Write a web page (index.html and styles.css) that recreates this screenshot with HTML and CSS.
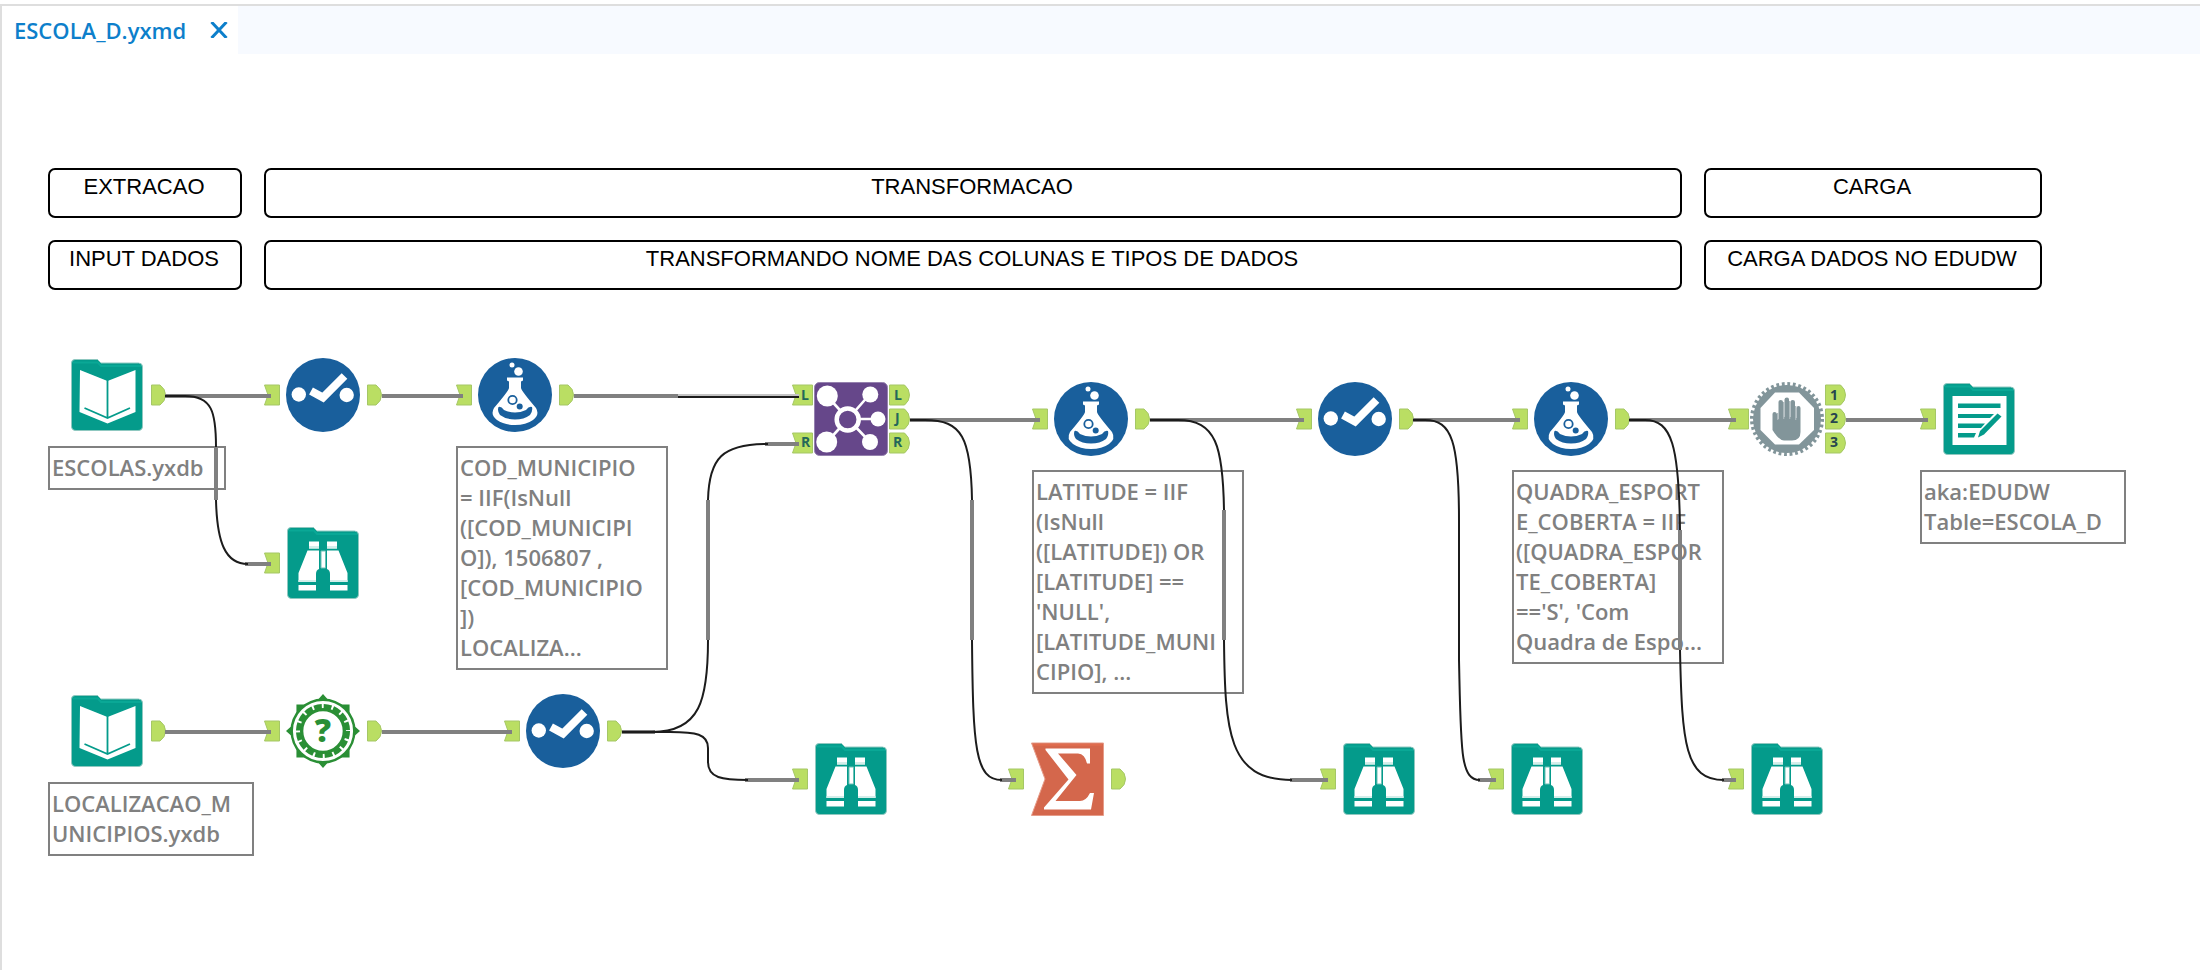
FILE: index.html
```html
<!DOCTYPE html>
<html lang="pt">
<head>
<meta charset="utf-8">
<title>ESCOLA_D.yxmd</title>
<link rel="stylesheet" href="styles.css">
</head>
<body>
<svg class="defs" aria-hidden="true">
  <symbol id="port-in" viewBox="0 0 16 22"><path class="port-shape" d="M.5 1H15.500V21H.5L4 11Z"/></symbol>
  <symbol id="port-out" viewBox="0 0 15 22"><path class="port-shape" d="M.5 1H9Q14.500 5 14.500 11Q14.500 17 9 21H.5Z"/></symbol>
  <symbol id="port-in-wide" viewBox="0 0 21 22"><path class="port-shape" d="M.5 1H20.500V21H.5L4 11Z"/></symbol>
  <symbol id="port-out-wide" viewBox="0 0 21 22"><path class="port-shape" d="M.5 1H15.500Q20.500 5 20.500 11Q20.500 17 15.500 21H.5Z"/></symbol>

  <symbol id="folder" viewBox="0 0 74 74">
    <path d="M5 1.500H27.500L31 5H68.500Q72.500 5 72.500 9V68Q72.500 72.500 68 72.500H6Q1.500 72.500 1.500 68V5Q1.500 1.500 5 1.500Z" fill="#049b8b" stroke="#8fc8c0" stroke-width="1"/>
    <path d="M3 4.500H28L31 8H71" fill="none" stroke="#0aa896" stroke-width="2"/>
  </symbol>

  <symbol id="input" viewBox="0 0 74 74">
    <use href="#folder"/>
    <path d="M10 12L37.500 23L65.500 12V54L37.500 65.500L9.500 54Z" fill="#fff"/>
    <path d="M37.500 22V60M14.500 50L37.500 60L60 50" fill="none" stroke="#049b8b" stroke-width="1.800"/>
  </symbol>

  <symbol id="browse" viewBox="0 0 74 74">
    <use href="#folder"/>
    <path fill="#fff" d="M23 15.500H33V22.500H23ZM41 15.500H51V22.500H41ZM21.500 24.500H33V43Q30 44 30 48V56H12.500V47ZM41 24.500H52.500L61.500 47V56H44V48Q44 44 41 43ZM12.500 59H30V64.500H12.500ZM44 59H61.500V64.500H44Z"/>
    <path fill="#d4eeea" d="M23 20H33V22.500H23ZM41 20H51V22.500H41ZM12.500 54H30V56H12.500ZM44 54H61.500V56H44Z"/>
    <path fill="#fff" stroke="#6dc0b6" stroke-width="1" d="M35 25H39.500V42H35Z"/>
  </symbol>

  <symbol id="select" viewBox="0 0 74 74">
    <circle cx="37" cy="37" r="37" fill="#195f9c"/>
    <circle cx="12.800" cy="36.500" r="7.200" fill="#fff"/>
    <circle cx="60.700" cy="37" r="7.200" fill="#fff"/>
    <path d="M25 33L37 39.500L58.500 18" fill="none" stroke="#fff" stroke-width="8"/>
  </symbol>

  <symbol id="formula" viewBox="0 0 74 74">
    <circle cx="37" cy="37" r="37" fill="#195f9c"/>
    <circle cx="34" cy="7" r="2.500" fill="#fff"/>
    <circle cx="40.500" cy="13.500" r="4.300" fill="#fff"/>
    <path d="M29 19.500H45V22.500L43 23.500V30Q43.500 33 58 50Q62 57 55 62Q48 67 37 67Q26 67 19 62Q12 57 16 50Q30.500 33 31 30V23.500L29 22.500Z" fill="#fff"/>
    <path d="M20.500 49Q23 48 26 52Q37 57 48 52Q51 48 54 49Q55 53 52 57Q46 61.500 37 61.500Q28 61.500 22 57Q19 53 20.500 49Z" fill="#195f9c"/>
    <circle cx="34.500" cy="42" r="4.200" fill="#fff" stroke="#195f9c" stroke-width="1.800"/>
    <circle cx="41.700" cy="48.500" r="3" fill="#195f9c"/>
  </symbol>

  <symbol id="test" viewBox="0 0 78 78">
    <path fill="#2a8f35" d="M11 11H26L11 26ZM67 11V26L52 11ZM67 67H52L67 52ZM11 67V52L26 67ZM39 0L46 8H32ZM39 78L32 70H46ZM0 39L8 32V46ZM78 39L70 46V32Z"/>
    <circle cx="39" cy="39" r="33" fill="#fff" stroke="#2a8f35" stroke-width="2.600"/>
    <circle cx="39" cy="39" r="25.500" fill="none" stroke="#2a8f35" stroke-width="6" stroke-dasharray="8 2.010"/>
    <circle cx="39" cy="39" r="22.500" fill="none" stroke="#2a8f35" stroke-width="3.500"/>
  </symbol>

  <symbol id="join" viewBox="0 0 74 74">
    <rect x=".5" y=".5" width="73" height="73" rx="5" fill="#66478a" stroke="#9581ae"/>
    <path d="M13 14L34 37L56 12M34 37H64M13 60L34 37L56 60" fill="none" stroke="#fff" stroke-width="2.600"/>
    <g fill="#fff">
      <circle cx="13.300" cy="14" r="10.500"/><circle cx="12.700" cy="60" r="10.500"/>
      <circle cx="56.300" cy="12.500" r="8"/><circle cx="64" cy="37" r="7.500"/><circle cx="56" cy="60" r="8"/>
    </g>
    <circle cx="33.700" cy="37.500" r="11" fill="#66478a" stroke="#fff" stroke-width="4.500"/>
  </symbol>

  <symbol id="block" viewBox="0 0 74 74">
    <circle cx="37" cy="37" r="35" fill="none" stroke="#82959a" stroke-width="4" stroke-dasharray="2.800 2.700"/>
    <circle cx="37" cy="37" r="34" fill="#82959a"/>
    <path d="M25 10.500H49L64 26V48L49 62.500H25L10.500 48V26Z" fill="#fff"/>
    <path fill="#82959a" d="M22.500 32Q22.500 30 24.500 30Q26.500 30 27 32V37H28.500V20Q28.500 18 30.700 18Q33 18 33 20V35H34.500V17.500Q34.500 15.500 37 15.500Q39 15.500 39 17.500V35H40.500V20Q40.500 18 42.700 18Q45 18 45 20V36H46.500V26Q46.500 24 48.500 24Q50.500 24 50.500 26V50Q50.500 58.500 42 58.500H34Q29 58.500 22.500 48Z"/>
    <path d="M27.700 31V38M33.700 20V37M39.700 19V37M45.700 24V38" stroke="#a9b6b9" stroke-width="1.300"/>
  </symbol>

  <symbol id="output" viewBox="0 0 74 74">
    <use href="#folder"/>
    <path d="M10.500 14H64.500V63H10.500Z" fill="#fff"/>
    <path d="M16 21.500H58.500V26H16ZM16 32H52L48 36H16ZM16 41.500H43L39 46H16ZM16 51H34L32 55.500H16Z" fill="#049b8b"/>
    <path d="M36 55.500L38 49L55.500 31.500L59.500 34.500L42 52.500Z" fill="#049b8b"/>
  </symbol>

  <symbol id="summarize" viewBox="0 0 74 74">
    <path d="M1.500 1H73.500V73.500H1.500L15 37Z" fill="#d4674c" stroke="#e69c89"/>
    <path d="M3 2.800H72" stroke="#e06c4e" stroke-width="2"/>
    <path d="M15.500 6.500H60V21.500H57Q55 12 48 11.500H28L46.500 33L25.500 59H50Q56 59 60 51H64L61 67.500H14V65.500L38.500 37.500L15.500 8Z" fill="#fff"/>
  </symbol>
</svg>

<div class="app">
  <header class="tabs">
    <div class="tab">
      <a class="tab-name" href="#fluxo">ESCOLA_D.yxmd</a>
      <button class="tab-close" type="button" aria-label="Fechar">
        <svg viewBox="0 0 18 16"><path d="M1.500 0L16.500 16M16.500 0L1.500 16"/></svg>
      </button>
    </div>
  </header>

  <main class="canvas" id="fluxo">
    <section class="stages">
      <div class="stage">EXTRACAO</div>
      <div class="stage">TRANSFORMACAO</div>
      <div class="stage">CARGA</div>
      <div class="stage">INPUT DADOS</div>
      <div class="stage">TRANSFORMANDO NOME DAS COLUNAS E TIPOS DE DADOS</div>
      <div class="stage">CARGA DADOS NO EDUDW</div>
    </section>

    <section class="flow">
      <div class="node n-input1">
        <div class="ports"></div>
        <svg class="icon"><use href="#input"/></svg>
        <div class="ports out"><svg class="p-out"><use href="#port-out"/></svg></div>
        <p class="note short">ESCOLAS.yxdb</p>
      </div>
      <div class="node n-select1">
        <div class="ports"><svg class="p-in"><use href="#port-in"/></svg></div>
        <svg class="icon"><use href="#select"/></svg>
        <div class="ports out"><svg class="p-out"><use href="#port-out"/></svg></div>
      </div>
      <div class="node n-formula1">
        <div class="ports"><svg class="p-in"><use href="#port-in"/></svg></div>
        <svg class="icon"><use href="#formula"/></svg>
        <div class="ports out"><svg class="p-out"><use href="#port-out"/></svg></div>
        <p class="note">COD_MUNICIPIO<br>= IIF(IsNull<br>([COD_MUNICIPI<br>O]), 1506807 ,<br>[COD_MUNICIPIO<br>])<br>LOCALIZA...</p>
      </div>
      <div class="node n-browse1">
        <div class="ports"><svg class="p-in"><use href="#port-in"/></svg></div>
        <svg class="icon"><use href="#browse"/></svg>
      </div>
      <div class="node n-input2">
        <div class="ports"></div>
        <svg class="icon"><use href="#input"/></svg>
        <div class="ports out"><svg class="p-out"><use href="#port-out"/></svg></div>
        <p class="note medium">LOCALIZACAO_M<br>UNICIPIOS.yxdb</p>
      </div>
      <div class="node n-test">
        <div class="ports"><svg class="p-in"><use href="#port-in"/></svg></div>
        <svg class="icon" viewBox="0 0 78 78"><use href="#test"/><text class="test-mark" x="39" y="51" text-anchor="middle">?</text></svg>
        <div class="ports out"><svg class="p-out"><use href="#port-out"/></svg></div>
      </div>
      <div class="node n-select2">
        <div class="ports"><svg class="p-in"><use href="#port-in"/></svg></div>
        <svg class="icon"><use href="#select"/></svg>
        <div class="ports out"><svg class="p-out"><use href="#port-out"/></svg></div>
      </div>
      <div class="node n-browse2">
        <div class="ports"><svg class="p-in"><use href="#port-in"/></svg></div>
        <svg class="icon"><use href="#browse"/></svg>
      </div>
      <div class="node n-join">
        <div class="ports pair">
          <svg class="p-wide"><use href="#port-in-wide"/><text x="9" y="16">L</text></svg>
          <svg class="p-wide"><use href="#port-in-wide"/><text x="9" y="15">R</text></svg>
        </div>
        <svg class="icon"><use href="#join"/></svg>
        <div class="ports out">
          <svg class="p-wide"><use href="#port-out-wide"/><text x="5" y="16">L</text></svg>
          <svg class="p-wide"><use href="#port-out-wide"/><text x="6" y="15">J</text></svg>
          <svg class="p-wide"><use href="#port-out-wide"/><text x="4" y="15">R</text></svg>
        </div>
      </div>
      <div class="node n-formula2">
        <div class="ports"><svg class="p-in"><use href="#port-in"/></svg></div>
        <svg class="icon"><use href="#formula"/></svg>
        <div class="ports out"><svg class="p-out"><use href="#port-out"/></svg></div>
        <p class="note">LATITUDE = IIF<br>(IsNull<br>([LATITUDE]) OR<br>[LATITUDE] ==<br>'NULL',<br>[LATITUDE_MUNI<br>CIPIO], ...</p>
      </div>
      <div class="node n-summarize">
        <div class="ports"><svg class="p-in"><use href="#port-in"/></svg></div>
        <svg class="icon"><use href="#summarize"/></svg>
        <div class="ports out"><svg class="p-out"><use href="#port-out"/></svg></div>
      </div>
      <div class="node n-select3">
        <div class="ports"><svg class="p-in"><use href="#port-in"/></svg></div>
        <svg class="icon"><use href="#select"/></svg>
        <div class="ports out"><svg class="p-out"><use href="#port-out"/></svg></div>
      </div>
      <div class="node n-browse3">
        <div class="ports"><svg class="p-in"><use href="#port-in"/></svg></div>
        <svg class="icon"><use href="#browse"/></svg>
      </div>
      <div class="node n-browse4">
        <div class="ports"><svg class="p-in"><use href="#port-in"/></svg></div>
        <svg class="icon"><use href="#browse"/></svg>
      </div>
      <div class="node n-formula3">
        <div class="ports"><svg class="p-in"><use href="#port-in"/></svg></div>
        <svg class="icon"><use href="#formula"/></svg>
        <div class="ports out"><svg class="p-out"><use href="#port-out"/></svg></div>
        <p class="note">QUADRA_ESPORT<br>E_COBERTA = IIF<br>([QUADRA_ESPOR<br>TE_COBERTA]<br>=='S', 'Com<br>Quadra de Espo...</p>
      </div>
      <div class="node n-block">
        <div class="ports"><svg class="p-wide"><use href="#port-in-wide"/></svg></div>
        <svg class="icon"><use href="#block"/></svg>
        <div class="ports out">
          <svg class="p-wide"><use href="#port-out-wide"/><text class="dark" x="5" y="16">1</text></svg>
          <svg class="p-wide"><use href="#port-out-wide"/><text class="dark" x="5" y="15">2</text></svg>
          <svg class="p-wide"><use href="#port-out-wide"/><text class="dark" x="5" y="15">3</text></svg>
        </div>
      </div>
      <div class="node n-browse5">
        <div class="ports"><svg class="p-in"><use href="#port-in"/></svg></div>
        <svg class="icon"><use href="#browse"/></svg>
      </div>
      <div class="node n-output">
        <div class="ports"><svg class="p-in"><use href="#port-in"/></svg></div>
        <svg class="icon"><use href="#output"/></svg>
        <p class="note medium">aka:EDUDW<br>Table=ESCOLA_D</p>
      </div>

      <svg class="wires" viewBox="2 340 2198 500" aria-hidden="true">
        <path class="straight" d="M165 396H271M382 396H463M574 396H678M165 732H271M382 732H512M910 420H1040M1150 420H1304M1413 420H1520M1629 420H1736M1846 420H1928"/>
        <path class="straight" d="M245 564H271M216 447V500M622 732H655M745 780H799M708 500V640M765 444H799M972 500V640M1000 780H1016M1224 510V640M1290 780H1328M1478 780H1496M1680 530V650M1722 780H1736"/>
        <path class="curve" d="M165 396H185C212 396 216 412 216 447M216 500C217 542 225 564 248 564"/>
        <path class="curve" d="M622 732H652C700 732 708 700 708 640M708 500C709 458 722 444 768 444"/>
        <path class="curve" d="M622 732H670C696 732 708 734 708 748V762C708 778 722 780 748 780"/>
        <path class="soft" d="M678 395H799"/>
        <path class="curve" d="M678 397H799"/>
        <path class="curve" d="M910 420H925C962 420 971 438 972 500M972 640C973 748 975 780 1002 780"/>
        <path class="curve" d="M1150 420H1178C1216 420 1223 446 1224 510M1224 640C1225 732 1228 780 1292 780"/>
        <path class="curve" d="M1413 420H1425C1452 420 1459 442 1459 520V660C1461 750 1460 780 1480 780"/>
        <path class="curve" d="M1629 420H1645C1672 420 1679 446 1680 530M1680 650C1682 744 1685 780 1724 780"/>
      </svg>
    </section>
  </main>
</div>
</body>
</html>
```
FILE: styles.css
```css
* { box-sizing: border-box; }

body {
  margin: 0;
  background: #fff;
  font-family: "Open Sans", "Noto Sans", sans-serif;
}

.defs { position: absolute; width: 0; height: 0; }

.app {
  display: flex;
  flex-direction: column;
  min-height: 100vh;
  padding-top: 4px;
}

/* Document tabs */
.tabs {
  display: flex;
  height: 50px;
  background: #f7faff;
  border-top: 2px solid #dedede;
  border-left: 2px solid #dedede;
}

.tab {
  display: flex;
  align-items: center;
  gap: 24px;
  padding: 0 10px 0 12px;
  background: #fff;
}

.tab-name {
  color: #0d7fcb;
  font-size: 22px;
  font-weight: 600;
  line-height: 30px;
  text-decoration: none;
}

.tab-close {
  display: flex;
  padding: 0;
  border: 0;
  background: none;
}

.tab-close svg { width: 18px; height: 16px; }
.tab-close path { stroke: #0d7fcb; stroke-width: 3; fill: none; }

/* Canvas */
.canvas {
  flex: 1;
  padding-top: 114px;
  border-left: 2px solid #dedede;
}

.stages {
  display: grid;
  grid-template-columns: 194px 1fr 338px;
  gap: 22px;
  margin: 0 158px 0 46px;
}

.stage {
  height: 50px;
  padding: 4px 2px 0 0;
  border: 2px solid #000;
  border-radius: 7px;
  color: #000;
  font: 22px/26px "Liberation Sans", Arial, sans-serif;
  text-align: center;
}

.flow {
  position: relative;
  height: 500px;
  margin-top: 50px;
}

.wires {
  position: absolute;
  top: 0;
  left: 0;
  width: 2198px;
  height: 500px;
  pointer-events: none;
}

.straight { fill: none; stroke: #808080; stroke-width: 4; }
.curve { fill: none; stroke: #1c1c1c; stroke-width: 2; }
.soft { fill: none; stroke: #c4c4c4; stroke-width: 2; }

/* Tools */
.node {
  position: absolute;
  display: grid;
  grid-template-columns: 22px 74px 22px;
}

.icon { width: 74px; height: 74px; overflow: visible; }

.ports {
  display: flex;
  flex-direction: column;
  justify-content: center;
  gap: 2px;
  height: 74px;
}

.ports.out { align-items: flex-end; }
.ports.pair { gap: 26px; }

.p-in { width: 16px; height: 22px; }
.p-out { width: 15px; height: 22px; }
.p-wide { width: 21px; height: 22px; }
.port-shape { fill: #bade63; stroke: #a5c766; stroke-width: 1; }

.p-wide text {
  fill: #24675a;
  font-size: 14px;
  font-weight: 700;
}

.p-wide .dark { fill: #26454f; }

.test-mark {
  fill: #2a8f35;
  font-size: 34px;
  font-weight: 800;
}

.note {
  grid-column: 1 / -1;
  width: 212px;
  margin: 14px 0 0;
  padding: 4px 0 6px 2px;
  border: 2px solid #808080;
  color: #808080;
  font-size: 22px;
  font-weight: 600;
  line-height: 30px;
  white-space: nowrap;
}

.note.short { width: 178px; }
.note.medium { width: 206px; }

.n-input1 { left: 46px; top: 18px; }
.n-select1 { left: 262px; top: 18px; }
.n-formula1 { left: 454px; top: 18px; }
.n-browse1 { left: 262px; top: 186px; }
.n-input2 { left: 46px; top: 354px; }
.n-test { left: 262px; top: 354px; }
.n-select2 { left: 502px; top: 354px; }
.n-browse2 { left: 790px; top: 402px; }
.n-join { left: 790px; top: 42px; }
.n-formula2 { left: 1030px; top: 42px; }
.n-summarize { left: 1006px; top: 402px; }
.n-select3 { left: 1294px; top: 42px; }
.n-browse3 { left: 1318px; top: 402px; }
.n-browse4 { left: 1486px; top: 402px; }
.n-formula3 { left: 1510px; top: 42px; }
.n-block { left: 1726px; top: 42px; }
.n-browse5 { left: 1726px; top: 402px; }
.n-output { left: 1918px; top: 42px; }
```
